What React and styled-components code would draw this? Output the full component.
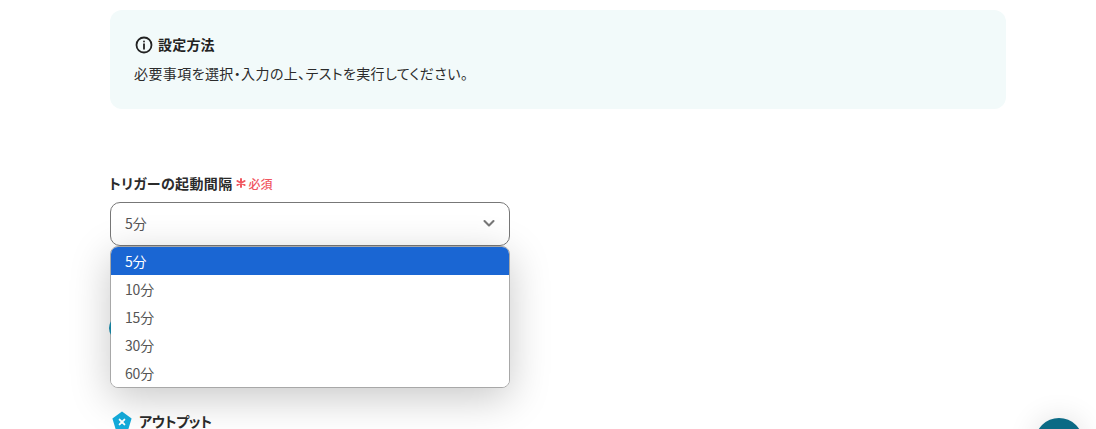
import React from "react";
import styled, { createGlobalStyle } from "styled-components";

const Global = createGlobalStyle`
  html, body { margin: 0; padding: 0; background: #fff; height: 429px; overflow: hidden; }
  body { font-family: "Noto Sans CJK JP", "Noto Sans", sans-serif; color: #2b2b2b; font-feature-settings: "palt"; }
`;
const Page = styled.div`
  position: relative; width: 1096px; height: 429px; overflow: hidden;
  padding: 10px 90px 0 110px; box-sizing: border-box;
`;
const Notice = styled.section`
  height: 99px; box-sizing: border-box; padding: 25px 24px 0; border-radius: 12px; background: #f2fafa;
`;
const NoticeHead = styled.div`display: flex; align-items: center; gap: 5px; height: 20px; padding-left: 1px;`;
const NoticeTitle = styled.h2`margin: 0 0 2px; font-size: 14px; line-height: 18px; font-weight: 700; letter-spacing: .2px; color: #222;`;
const NoticeBody = styled.p`margin: 8px 0 0; font-size: 14px; line-height: 20px; letter-spacing: .4px; color: #2b2b2b;`;
const Field = styled.div`position: relative; width: 400px; margin-top: 65px;`;
const Label = styled.div`display: flex; align-items: center; box-sizing: border-box; height: 20px; padding-bottom: 2px; margin-left: -1px; font-size: 14px; font-weight: 700; letter-spacing: .35px; color: #2b2b2b;`;
const Required = styled.span`display: inline-flex; align-items: center; gap: 3px; margin-left: 3px; font-size: 12px; font-weight: 500; letter-spacing: 0; color: #f0565f;`;
const Trigger = styled.div`
  display: flex; align-items: center; justify-content: space-between; box-sizing: border-box;
  height: 44px; margin-top: 8px; padding: 0 13px 2px 14px; border: 1px solid #777; border-radius: 10px;
  background: #fff; font-size: 14px; color: #555;
`;
const Menu = styled.ul`
  position: absolute; z-index: 2; left: 0; top: 72px; width: 400px; box-sizing: border-box; margin: 0; padding: 0;
  list-style: none; border: 1px solid #a8a8a8; border-radius: 8px; overflow: hidden; background: #fff;
  box-shadow: 0 10px 40px rgba(0,0,0,.22);
`;
const Option = styled.li`
  height: 28px; line-height: 29px; padding-left: 14px; font-size: 14px; letter-spacing: -.2px;
  background: ${p => p.$active ? "#1a66d3" : "#fff"}; color: ${p => p.$active ? "#fff" : "#555"};
`;
const Peek = styled.div`
  position: absolute; z-index: 3; left: -1px; top: 142px; width: 24px; height: 24px; border-radius: 50%; background: #14809e;
  clip-path: inset(0 22px 0 0);
`;
const Output = styled.div`
  position: absolute; left: 112px; top: 411px; display: flex; align-items: center; gap: 7px;
  font-size: 14px; font-weight: 700; line-height: 20px; letter-spacing: -.3px; color: #2b2b2b;
`;
const Fab = styled.div`
  position: absolute; left: 1035px; top: 418px; width: 48px; height: 48px; border-radius: 50%;
  background: #0b6a85; box-shadow: 0 0 30px rgba(0,0,0,.12);
`;
const InfoIcon = () => (
  <svg width="18" height="18" viewBox="0 0 24 24" fill="none" stroke="#222" strokeWidth="2.4" strokeLinecap="round">
    <circle cx="12" cy="12" r="10" /><path d="M12 11v6" /><path d="M12 7.2v.1" />
  </svg>
);
const Chevron = () => (
  <svg width="14" height="14" viewBox="0 0 14 14" fill="none" stroke="#777" strokeWidth="2.1" strokeLinecap="round" strokeLinejoin="round">
    <path d="M2.5 5 7 9.5 11.5 5" />
  </svg>
);
const Star = () => (
  <svg width="10" height="10" viewBox="0 0 10 10" stroke="#f0565f" strokeWidth="2" strokeLinecap="round">
    <path d="M5 1v8M1.4 3 8.6 7M8.6 3 1.4 7" />
  </svg>
);
const Pentagon = () => (
  <svg width="20" height="20" viewBox="0 0 20 20">
    <path d="M10 .4 19.6 7.4 16.4 18a1.4 1.4 0 0 1-1.3 1H4.9a1.4 1.4 0 0 1-1.3-1L.4 7.4Z" fill="#14acdc" />
    <path d="M7.6 8.6l4.8 4.8M12.4 8.6l-4.8 4.8" stroke="#fff" strokeWidth="1.9" strokeLinecap="round" />
  </svg>
);

const options = ["5分", "10分", "15分", "30分", "60分"];

export default function App() {
  return (
    <Page>
      <Global />
      <Notice>
        <NoticeHead><InfoIcon /><NoticeTitle>設定方法</NoticeTitle></NoticeHead>
        <NoticeBody>必要事項を選択・入力の上、テストを実行してください。</NoticeBody>
      </Notice>
      <Field>
        <Label>トリガーの起動間隔<Required><Star />必須</Required></Label>
        <Trigger>5分<Chevron /></Trigger>
        <Peek />
        <Menu>{options.map((o, i) => <Option key={o} $active={i === 0}>{o}</Option>)}</Menu>
      </Field>
      <Output><Pentagon />アウトプット</Output>
      <Fab />
    </Page>
  );
}
